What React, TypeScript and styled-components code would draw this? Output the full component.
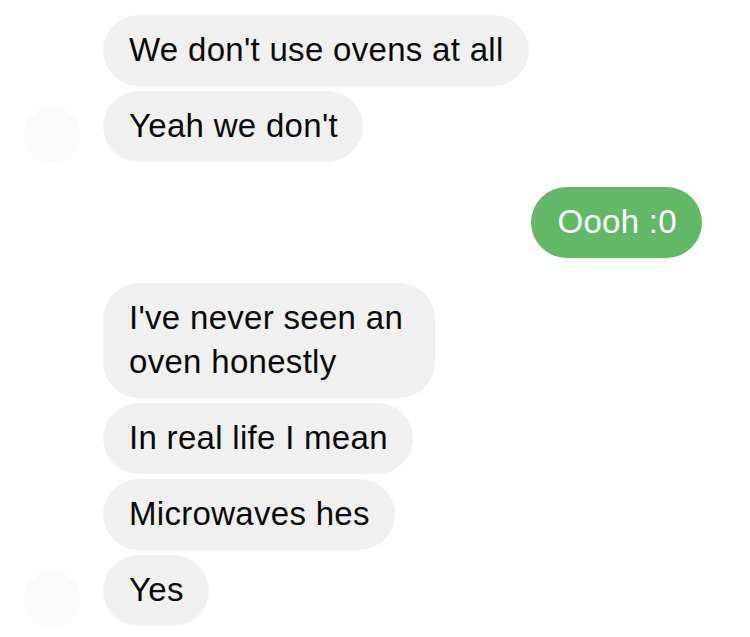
import styled, { createGlobalStyle } from "styled-components"

const GlobalStyle = createGlobalStyle`
  body {
    margin: 0;
    background: #ffffff;
    font-family: "Liberation Sans", Arial, sans-serif;
  }
`

const Thread = styled.div`
  display: flex;
  flex-direction: column;
  gap: 25px;
  padding: 15px 48px 0 24px;
  width: 750px;
  box-sizing: border-box;
`

const Group = styled.div<{ $out?: boolean }>`
  display: flex;
  align-items: flex-end;
  justify-content: ${(p) => (p.$out ? "flex-end" : "flex-start")};
  gap: 23px;
`

const Avatar = styled.div`
  flex: 0 0 56px;
  height: 56px;
  margin-bottom: -1px;
  border-radius: 50%;
  background: #fafafa;
`

const Stack = styled.div`
  display: flex;
  flex-direction: column;
  align-items: flex-start;
  gap: 5px;
`

const Bubble = styled.div<{ $out?: boolean }>`
  box-sizing: border-box;
  max-width: 332px;
  padding: 13px 25px 14px 26px;
  border-radius: 36px;
  font-size: 33px;
  line-height: 44px;
  letter-spacing: 0.3px;
  white-space: pre-wrap;
  background: ${(p) => (p.$out ? "#62b867" : "#f0f0f0")};
  color: ${(p) => (p.$out ? "#ffffff" : "#0a0a0a")};
`

const Wide = styled(Bubble)`
  max-width: none;
`

const App = () => {
  return (
    <>
      <GlobalStyle />
      <Thread>
        <Group>
          <Avatar />
          <Stack>
            <Wide>We don't use ovens at all</Wide>
            <Bubble>Yeah we don't</Bubble>
          </Stack>
        </Group>
        <Group $out>
          <Bubble $out>Oooh :0</Bubble>
        </Group>
        <Group>
          <Avatar />
          <Stack>
            <Bubble>I've never seen an oven honestly</Bubble>
            <Bubble>In real life I mean</Bubble>
            <Bubble>Microwaves hes</Bubble>
            <Bubble>Yes</Bubble>
          </Stack>
        </Group>
      </Thread>
    </>
  )
}

export default App
